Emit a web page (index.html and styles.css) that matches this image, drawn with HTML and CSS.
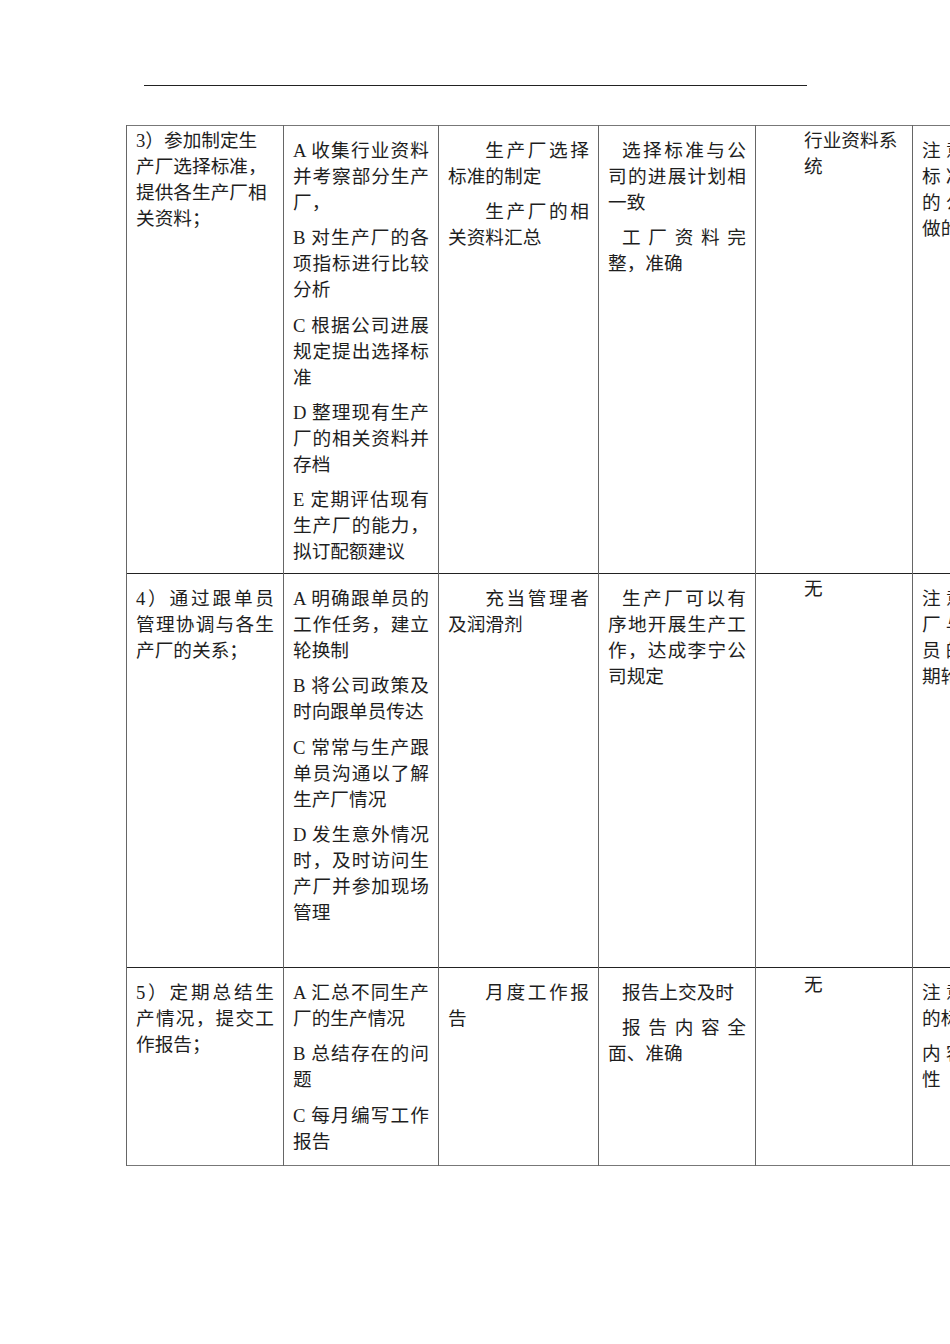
FILE: index.html
```html
<!DOCTYPE html>
<html lang="zh-CN">
<head>
<meta charset="utf-8">
<title>生产厂管理职责</title>
<link rel="stylesheet" href="styles.css">
</head>
<body>
<div class="page">
  <div class="header-rule"></div>
  <table class="duty-table">
    <colgroup>
      <col class="c1"><col class="c2"><col class="c3"><col class="c4"><col class="c5"><col class="c6">
    </colgroup>
    <tr class="r1">
      <td class="duty flush left">3）参加制定生产厂选择标准，提供各生产厂相关资料；</td>
      <td class="steps">
        <p>A 收集行业资料并考察部分生产厂，</p>
        <p>B 对生产厂的各项指标进行比较分析</p>
        <p>C 根据公司进展规定提出选择标准</p>
        <p>D 整理现有生产厂的相关资料并存档</p>
        <p>E 定期评估现有生产厂的能力，拟订配额建议</p>
      </td>
      <td class="result">
        <p>生产厂选择标准的制定</p>
        <p>生产厂的相关资料汇总</p>
      </td>
      <td class="standard">
        <p>选择标准与公司的进展计划相一致</p>
        <p>工厂资料完整，准确</p>
      </td>
      <td class="tools">行业资料系统</td>
      <td class="notes">
        <p><span class="ln">注意生产厂选</span><span class="ln">标准要符合公</span><span class="ln">的公平性，对</span><span class="ln last">做的资料负责</span></p>
      </td>
    </tr>
    <tr class="r2">
      <td class="duty"><p>4）通过跟单员管理协调与各生产厂的关系；</p></td>
      <td class="steps">
        <p>A 明确跟单员的工作任务，建立轮换制</p>
        <p>B 将公司政策及时向跟单员传达</p>
        <p>C 常常与生产跟单员沟通以了解生产厂情况</p>
        <p>D 发生意外情况时，及时访问生产厂并参加现场管理</p>
      </td>
      <td class="result"><p>充当管理者及润滑剂</p></td>
      <td class="standard"><p>生产厂可以有序地开展生产工作，达成李宁公司规定</p></td>
      <td class="tools">无</td>
      <td class="notes">
        <p><span class="ln">注意协调生产</span><span class="ln">厂与公司跟单</span><span class="ln">员的关系，定</span><span class="ln last">期轮换跟单员</span></p>
      </td>
    </tr>
    <tr class="r3">
      <td class="duty"><p>5）定期总结生产情况，提交工作报告；</p></td>
      <td class="steps">
        <p>A 汇总不同生产厂的生产情况</p>
        <p>B 总结存在的问题</p>
        <p>C 每月编写工作报告</p>
      </td>
      <td class="result"><p>月度工作报告</p></td>
      <td class="standard">
        <p>报告上交及时</p>
        <p>报告内容全面、准确</p>
      </td>
      <td class="tools">无</td>
      <td class="notes">
        <p><span class="ln">注意工作报告</span><span class="ln last">的标准化</span></p>
        <p><span class="ln">内容要有真实</span><span class="ln last">性</span></p>
      </td>
    </tr>
  </table>
</div>
</body>
</html>
```

FILE: styles.css
```css
html, body {
  margin: 0;
  padding: 0;
  overflow-x: hidden;
  background: #ffffff;
}

body {
  font-family: "Liberation Serif", "Noto Sans CJK SC", serif;
  font-size: 18.67px;
  line-height: 26px;
  color: #1e1e1e;
}

.page {
  padding-top: 85px;
  width: 1100px;
}

.header-rule {
  margin-left: 144px;
  width: 663px;
  border-top: 1.5px solid #222;
}

.duty-table {
  margin-top: 39px;
  margin-left: 126px;
  border-collapse: collapse;
  table-layout: fixed;
  width: 943px;
  border-top: 1px solid #777;
  border-bottom: 1px solid #777;
}

.c1 { width: 157px; }
.c2 { width: 155px; }
.c3 { width: 160px; }
.c4 { width: 157px; }
.c5 { width: 157px; }
.c6 { width: 157px; }

.r1 { height: 448px; }
.r2 { height: 394px; }
.r3 { height: 198px; }

.duty-table tr + tr td {
  border-top: 1px solid #222;
}

.duty-table td {
  vertical-align: top;
  border-left: 1px solid #666;
  border-right: 1px solid #666;
  padding: 2px 9px 0 9px;
  text-align: justify;
}

.duty-table p {
  margin: 9.3px 0 0 0;
}

.duty-table td > p:first-child {
  margin-top: 10px;
}

.duty.left {
  text-align: left;
}

.steps {
  padding-left: 10px;
}

.result p {
  text-indent: 2em;
}

.standard {
  padding-left: 10px;
}

.standard p {
  text-indent: 14px;
}

.duty-table td.tools {
  padding-left: 48px;
  text-align: left;
}

.duty-table .r3 td.tools {
  padding-top: 4px;
}

.notes {
  padding-left: 10px;
}

.ln {
  display: block;
  text-align: justify;
  text-align-last: justify;
}

.ln.last {
  text-align-last: left;
}
```
